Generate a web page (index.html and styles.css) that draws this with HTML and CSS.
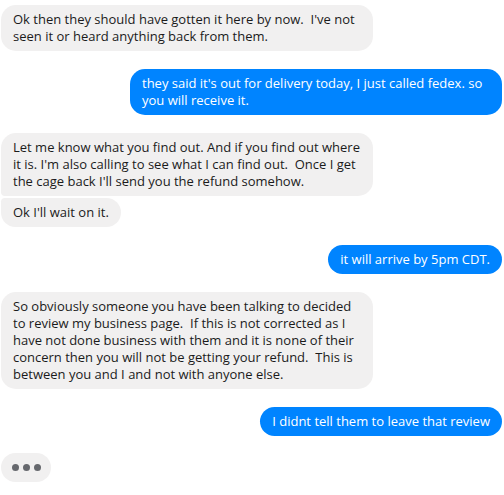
FILE: index.html
```html
<!DOCTYPE html>
<html>
<head>
<meta charset="utf-8">
<link rel="stylesheet" href="styles.css">
</head>
<body>
<div class="thread">
  <div class="msg in">Ok then they should have gotten it here by now.&nbsp; I've not seen it or heard anything back from them.</div>
  <div class="msg out">they said it's out for delivery today, I just called fedex. so you will receive it.</div>
  <div class="msg in first">Let me know what you find out. And if you find out where it is. I'm also calling to see what I can find out.&nbsp; Once I get the cage back I'll send you the refund somehow.</div>
  <div class="msg in last">Ok I'll wait on it.</div>
  <div class="msg out">it will arrive by 5pm CDT.</div>
  <div class="msg in">So obviously someone you have been talking to decided to review my business page.&nbsp; If this is not corrected as I have not done business with them and it is none of their concern then you will not be getting your refund.&nbsp; This is between you and I and not with anyone else.</div>
  <div class="msg out">I didnt tell them to leave that review</div>
  <div class="typing"><span></span><span></span><span></span></div>
</div>
</body>
</html>
```
FILE: styles.css
```css
html, body {
  margin: 0;
  padding: 0;
  background: #ffffff;
}
.thread {
  display: flex;
  flex-direction: column;
  align-items: flex-start;
  padding: 5px 2px 0 1px;
  gap: 18px;
  font-family: "Open Sans", "Noto Sans", sans-serif;
  font-size: 13px;
  line-height: 17px;
}
.msg {
  max-width: 348px;
  padding: 6px 12px 6px 12px;
  border-radius: 15px;
  word-wrap: break-word;
}
.in {
  background: #f1f0f0;
  color: #1b1b1b;
}
.out {
  align-self: flex-end;
  background: #0084ff;
  color: #ffffff;
}
.in.first {
  border-bottom-left-radius: 4px;
}
.in.last {
  border-top-left-radius: 4px;
  margin-top: -16px;
}
.typing {
  display: flex;
  gap: 4px;
  align-items: center;
  padding: 11px 10px 11px 11px;
  margin-top: -1px;
  background: #f1f0f0;
  border-radius: 15px;
}
.typing span {
  width: 7px;
  height: 7px;
  border-radius: 50%;
  background: #66686d;
}
```
